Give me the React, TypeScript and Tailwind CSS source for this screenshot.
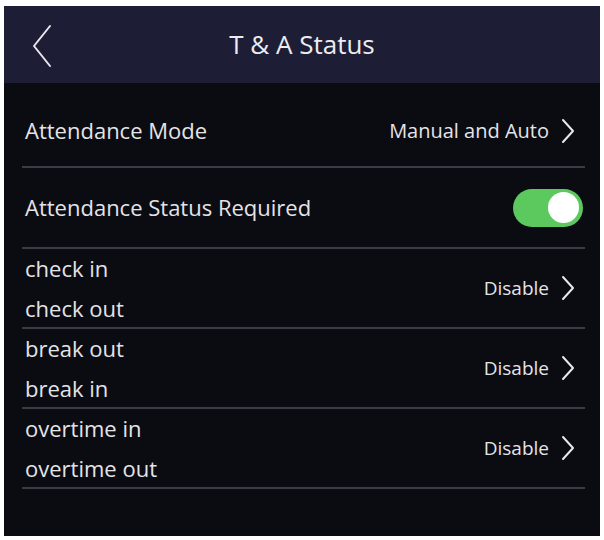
const Chevron = () => (
  <svg width="14" height="26" viewBox="0 0 14 26" fill="none" className="shrink-0">
    <path d="M2 2l10 11L2 24" stroke="#e8e8ec" strokeWidth="2" strokeLinecap="round" strokeLinejoin="round" />
  </svg>
);

const Divider = () => <div className="ml-[18px] mr-[15px] h-[2px] bg-[#3a3b46]" />;

const StatusRow = ({ first, second }: { first: string; second: string }) => (
  <>
    <div className="flex h-[78px] items-center pl-[21px] pr-[25px]">
      <div className="flex flex-1 flex-col text-[22px] leading-[40px]">
        <span>{first}</span>
        <span>{second}</span>
      </div>
      <span className="mr-[12px] text-[19px]">Disable</span>
      <Chevron />
    </div>
    <Divider />
  </>
);

export default function App() {
  return (
    <div className="h-[540px] w-[604px] bg-white pl-[4px] pr-[4px] pt-[6px] pb-[4px]">
      <div
        className="flex h-full flex-col bg-[#0b0b12] text-[#e4e4e8]"
        style={{ fontFamily: '"Open Sans", "Noto Sans", sans-serif' }}
      >
        <div className="relative flex h-[77px] items-center justify-center bg-[#1d1e36]">
          <svg width="22" height="44" viewBox="0 0 22 44" fill="none" className="absolute left-[27px] top-[18px]">
            <path d="M19 2L3 22l16 20" stroke="#e8e8ec" strokeWidth="2" strokeLinecap="round" strokeLinejoin="round" />
          </svg>
          <span className="text-[26px] text-[#ececf0]">T &amp; A Status</span>
        </div>

        <div className="flex h-[83px] items-center pl-[21px] pr-[25px] pt-[12px]">
          <span className="flex-1 text-[22px]">Attendance Mode</span>
          <span className="mr-[12px] text-[20px]">Manual and Auto</span>
          <Chevron />
        </div>
        <Divider />

        <div className="flex h-[79px] items-center pl-[21px] pr-[17px]">
          <span className="flex-1 text-[22px]">Attendance Status Required</span>
          <div className="flex h-[38px] w-[70px] items-center justify-end rounded-full bg-[#5cc95f] pr-[4px]">
            <div className="h-[31px] w-[31px] rounded-full bg-white" />
          </div>
        </div>
        <Divider />

        <StatusRow first="check in" second="check out" />
        <StatusRow first="break out" second="break in" />
        <StatusRow first="overtime in" second="overtime out" />
      </div>
    </div>
  );
}
